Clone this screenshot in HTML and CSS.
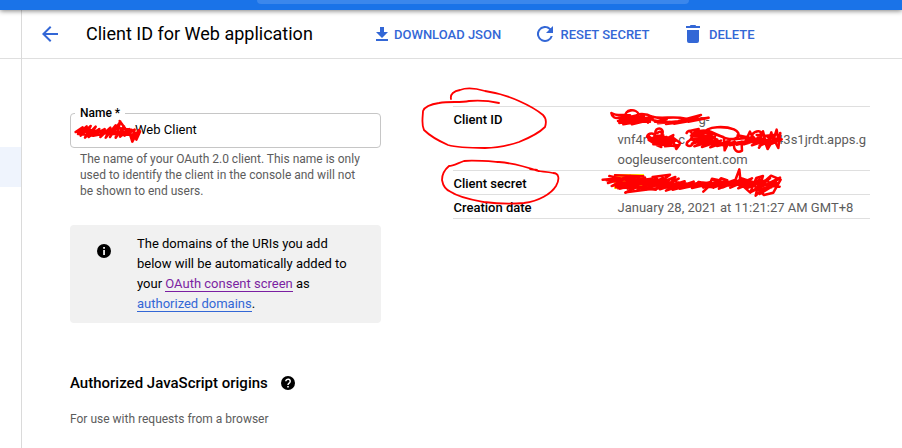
FILE: index.html
```html
<!DOCTYPE html>
<html lang="en">
<head>
<meta charset="utf-8">
<title>Client ID for Web application</title>
<link rel="stylesheet" href="styles.css">
</head>
<body>
<div class="topbar"><div class="search"></div></div>
<div class="shell">
  <aside class="sidebar">
    <div class="side-head"></div>
    <div class="side-active"></div>
  </aside>
  <main class="main">
    <header class="toolbar">
      <svg class="back" width="24" height="24" viewBox="0 0 24 24"><path d="M20 11H7.83l5.59-5.59L12 4l-8 8 8 8 1.41-1.41L7.83 13H20z"/></svg>
      <h1>Client ID for Web application</h1>
      <a class="action download"><svg width="18" height="18" viewBox="0 0 18 18"><path d="M7 2h4v5h4l-6 6-6-6h4zM3 14h12v2H3z"/></svg><span>DOWNLOAD JSON</span></a>
      <a class="action reset"><svg width="24" height="24" viewBox="0 0 24 24"><path d="M17.65 6.35A8 8 0 1 0 19.73 14h-2.08A6 6 0 1 1 12 6c1.66 0 3.14.69 4.22 1.78L13 11h7V4z"/></svg><span>RESET SECRET</span></a>
      <a class="action delete"><svg width="14" height="18" viewBox="0 0 14 18"><path d="M0 1h3.8l.8-1h4.8l.8 1H14v2H0zM1 5h12v11a2 2 0 0 1-2 2H3a2 2 0 0 1-2-2z"/></svg><span>DELETE</span></a>
    </header>
    <div class="content">
      <section class="form">
        <div class="field"><span class="label">Name *</span><span class="value">Web Client</span></div>
        <p class="hint">The name of your OAuth 2.0 client. This name is only<br>used to identify the client in the console and will not<br>be shown to end users.</p>
        <div class="notice">
          <svg width="14" height="14" viewBox="0 0 14 14"><circle cx="7" cy="7" r="7"/><path class="cut" d="M6.2 6h1.7v5H6.2zM6.2 3h1.7v1.8H6.2z"/></svg>
          <p>The domains of the URIs you add<br>below will be automatically added to<br>your <a class="visited">OAuth consent screen</a> as<br><a>authorized domains</a>.</p>
        </div>
        <h2>Authorized JavaScript origins
          <svg width="14" height="14" viewBox="0 0 14 14"><circle cx="7" cy="7" r="7"/><path class="cut-line" d="M4.8 5.3a2.2 2.1 0 1 1 3.8 1.4C7.8 7.4 7 7.7 7 8.9"/><path class="cut" d="M6.2 9.9h1.6v1.6H6.2z"/></svg>
        </h2>
        <p class="sub">For use with requests from a browser</p>
      </section>
      <dl class="details">
        <div class="row"><dt>Client ID</dt><dd><span class="first-line">g-</span><span class="second-line">vnf4r<span class="mid">c</span><span class="tail">43s1jrdt.apps.g</span></span>oogleusercontent.com</dd></div>
        <div class="row"><dt>Client secret</dt><dd><span class="mark"></span></dd></div>
        <div class="row"><dt>Creation date</dt><dd>January 28, 2021 at 11:21:27 AM GMT+8</dd></div>
      </dl>
    </div>
  </main>
</div>
<svg class="ink" width="902" height="448" viewBox="0 0 902 448">
  <!-- circled labels -->
  <path class="pen" d="M451 99C450 94 454 91 460 90C468 87 478 89 485 91C499 93 508 96 519 101C528 105 537 110 543 115C547 119 546 124 545 127C538 134 529 138 519 142C507 146 498 148 485 148C472 148 458 148 448 145C439 141 430 136 424 130C421 124 423 116 423 111C425 106 432 104 439 103C450 101 460 103 469 101C480 100 490 101 499 103"/>
  <path class="pen" d="M538 171C521 165 510 163 499 162C485 161 473 160 464 161C458 163 453 166 449 166C443 171 442 175 442 180C443 186 446 190 451 192C460 198 473 200 484 202C499 204 513 204 524 203C539 201 551 194 556 186C560 179 559 173 553 173C546 171 539 172 535 170M530 169l7 1"/>
  <!-- name scribble -->
  <g class="scribble" transform="translate(70 115) scale(.3333)">
    <path d="M17 51L38 37 24 57 50 34 32 62 62 33 45 68 77 35 56 66 88 42 70 60 104 42 91 66 121 38 107 68 137 31 120 66 151 20 137 68 162 34 150 65 178 42 164 62 194 44 186 76M17 51L45 42 90 50 150 40 185 44M25 56L70 62 110 54 160 60 192 58M45 50L165 50M149 18L164 38 174 54M177 48L187 80 200 56 207 45 210 50 199 74 196 54"/>
  </g>
  <g class="scribble" transform="translate(600 105) scale(.3333)">
    <!-- first line of the client ID -->
    <path d="M34 24C35 35 46 42 57 38L90 31 60 43 112 31 54 48 132 33 58 54 150 37 70 58 158 43 96 58 155 34 144 53M34 24C50 35 70 28 90 31M75 38C72 11 110 10 116 28C130 26 144 28 158 36C190 43 220 32 258 41M160 36L200 43 165 50 210 51 174 55 235 49 198 57 265 49 222 56 278 43 236 48 303 30 265 50 326 38 280 44 240 52M160 46C200 58 240 50 300 42M62 49L150 50"/>
    <!-- second line of the client ID, left part -->
    <path d="M141 95C145 83 164 82 166 96C164 108 148 108 143 96ZM145 91C157 102 159 121 184 117M166 86C164 64 192 67 188 85M172 84C180 76 190 82 184 91M163 94L190 91 160 103 200 96 163 109 215 99 169 114 208 106 184 119 222 109 202 116 232 127 241 114 217 97 180 111 228 106 195 124 238 120 229 132 220 111M194 104L220 90 211 113M160 118L206 119M152 98L208 102 166 114 214 117M146 105L170 120 184 126"/>
    <!-- second line of the client ID, right part -->
    <path d="M260 84C264 72 280 80 276 96C270 114 260 103 260 119C273 130 280 115 284 105M265 79L296 72 273 92 311 84 276 104 323 92 276 116 340 97 283 124 352 104 306 126 363 107 331 127 382 109 351 123 404 111 370 121 426 110 390 121 451 106 410 119 468 103 434 117 489 101 456 121 512 101 479 122 533 101 506 120 545 103M286 80L319 107 301 85 342 114 329 88 368 119M309 86C322 61 378 64 402 73C427 85 415 105 387 102C356 97 339 77 311 86M298 78C330 70 350 93 370 96M372 102L374 136 390 104M404 110C396 137 414 145 426 137L425 116M401 103L450 98 413 91 472 109 455 90C469 74 487 75 484 93C480 110 451 108 454 97M432 118L450 80 464 110 489 79 500 122 514 82 519 109 530 74 536 108 541 84 535 129 521 101 503 132 493 105 477 128M502 95L541 104 508 112M280 92L345 95 300 104 360 116M284 80L330 82 296 90M470 90L500 92 530 88M440 112L520 108"/>
    <!-- client secret -->
    <path d="M8 224L60 220 24 234 91 213 35 243 116 222 48 247 135 218 60 251 155 223 83 251 171 220 113 254 190 219 137 253 208 225 164 254 236 221 180 253 254 229 198 257 281 230 218 254 302 232 239 251 333 231 276 249 351 232 310 248 382 226 342 247 405 225 369 247 427 222 391 248 456 220 415 250 481 223 438 251 510 220 455 260 540 218 479 267 531 235M28 213L96 229 155 221 130 238 205 237 175 225 263 246 230 232 338 247 295 231 394 242 340 225 445 245 395 230 539 245M76 263L109 247 168 254M158 216L210 209 176 235 226 216 204 243M310 260L326 245 336 221 354 225 340 248 363 220 379 225 357 251 388 239M404 231L418 193 422 232 431 222 441 248M416 231L451 263 458 244 469 219 489 213 480 242 513 212 542 224 520 263 492 270 476 255 514 247 503 226 472 250 449 232"/>
    <path d="M20 226L80 234 150 232 240 244 330 236 410 238M50 243L120 233 205 248M220 241L330 243 440 232M420 219L475 236 467 272 490 250 534 235M45 211L130 214 62 222 150 226M78 262L200 246M55 250L140 244"/>
  </g>
</svg>
</body>
</html>
```
FILE: styles.css
```css
* { box-sizing: border-box; }
body {
  margin: 0;
  width: 902px;
  height: 448px;
  overflow: hidden;
  background: #fff;
  color: #000;
  font: 13px/20px Roboto, sans-serif;
}
h1, h2, p, dl, dt, dd { margin: 0; }
svg { flex: none; display: block; fill: currentColor; }

.topbar {
  position: relative;
  height: 10px;
  padding-left: 257px;
  background: #1a73e8;
  box-shadow: 0 1px 5px rgba(0, 0, 0, .5);
}
.search {
  width: 432px;
  height: 4px;
  background: #3b87ec;
  border-radius: 0 0 6px 6px;
}

.shell { display: flex; height: 438px; }
.sidebar { width: 22px; border-right: 1px solid #dadada; }
.side-head { height: 49px; border-bottom: 1px solid #dfdfdf; }
.side-active { height: 40px; margin-top: 88px; background: #eff4fd; }
.main { flex: 1; }

.toolbar {
  display: flex;
  align-items: center;
  height: 49px;
  padding-left: 16px;
  border-bottom: 1px solid #dfdfdf;
}
.back { color: #3367d6; }
h1 { width: 289px; margin-left: 24px; font-size: 18px; font-weight: 400; line-height: 24px; white-space: nowrap; }
.action {
  display: flex;
  align-items: center;
  color: #3367d6;
  font-weight: 500;
  white-space: nowrap;
}
.action span { padding-top: 2px; }
.download { width: 160px; margin-left: -2px; gap: 3px; }
.reset { width: 153px; gap: 3.5px; }
.delete { gap: 9px; }

.content { display: flex; padding-left: 48px; }
.form { width: 311px; margin-top: 54px; }
.field {
  position: relative;
  height: 35px;
  padding: 6px 0 0 64px;
  border: 1px solid #c6c6c6;
  border-radius: 4px;
}
.label {
  position: absolute;
  left: 4px;
  top: -9px;
  padding: 0 5px;
  background: #fff;
  font-size: 12px;
  font-weight: 500;
  line-height: 16px;
}
.hint { margin: 3px 0 0 10px; color: #5c5c5c; font-size: 12px; line-height: 16px; white-space: nowrap; }
.notice {
  display: flex;
  height: 98px;
  margin-top: 26px;
  padding: 9px 0 0 27px;
  background: #f1f1f1;
  border-radius: 4px;
  white-space: nowrap;
}
.notice svg { margin: 10px 26px 0 0; }
.cut { fill: #fff; }
.cut-line { fill: none; stroke: #fff; stroke-width: 1.5; }
.notice a { color: #3367d6; border-bottom: 1px solid; }
.notice .visited { color: #7b1fa2; }
h2 { display: flex; align-items: center; gap: 13px; margin-top: 50px; font-size: 15px; font-weight: 500; line-height: 20px; white-space: nowrap; }
.sub { margin-top: 18px; color: #5c5c5c; font-size: 12px; line-height: 16px; }

.details { width: 417px; margin: 47px 0 0 72px; border-top: 1px solid #dfdfdf; align-self: flex-start; }
.row { display: flex; padding: 3px 0 0; min-height: 24px; border-bottom: 1px solid #dfdfdf; }
.row dt { width: 164px; padding-left: .5px; font-weight: 500; }
.row dd { padding-left: .5px; color: #5c5c5c; white-space: nowrap; }
.first-line { display: block; padding-left: 81px; }
.second-line { display: flex; }
.mid { margin-left: 31px; }
.tail { margin-left: 91px; }
.mark { display: block; width: 30px; height: 15px; margin-left: -4px; background: #ff0; }

.ink { position: absolute; left: 0; top: 0; pointer-events: none; }
.pen, .scribble { fill: none; stroke: #f00; stroke-width: 1.8; stroke-linecap: round; stroke-linejoin: round; }
.scribble { stroke-width: 7.6; }
```
